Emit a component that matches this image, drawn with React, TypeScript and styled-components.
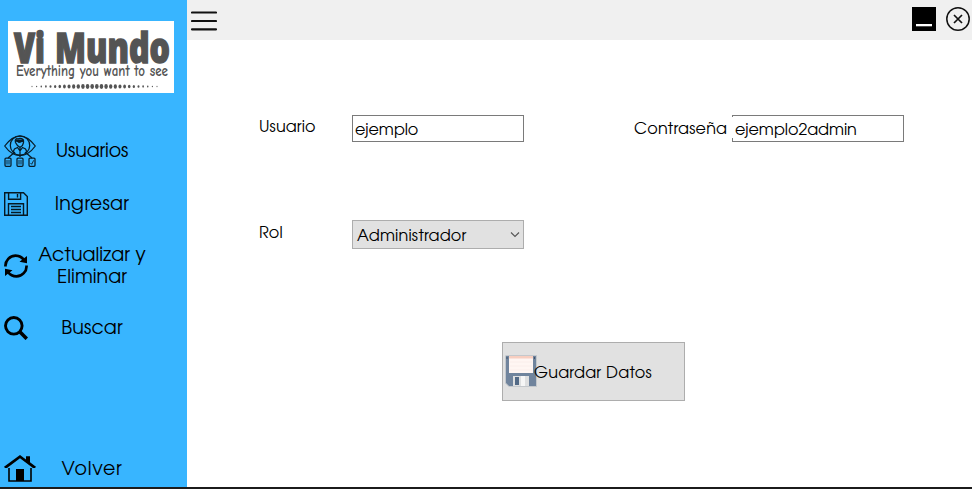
import React from "react";
import styled, { createGlobalStyle } from "styled-components";

const GlobalStyle = createGlobalStyle`
  *, *::before, *::after { box-sizing: border-box; }
  body { margin: 0; background: #fff; overflow: hidden; }
  body, input, button { font-family: "Century Gothic", "URW Gothic", "TeX Gyre Adventor", "Questrial", "Didact Gothic", "Jost", "Lato", sans-serif; color: #000; }
  svg { display: block; flex: none; }
`;

const Window = styled.div`
  display: grid;
  grid-template-columns: 187px 1fr;
  height: 489px;
  width: 972px;
  border-bottom: 2px solid #1b1b1b;
  background: #fff;
`;

const Sidebar = styled.aside`
  display: flex;
  flex-direction: column;
  background: #38b5ff;
  padding-top: 21px;
`;

const Logo = styled.div`
  width: 166px;
  height: 72px;
  margin: 0 0 32px 8px;
  background: #fff;
`;

const NavItem = styled.a<{ $height: number; $last?: boolean }>`
  display: grid;
  grid-template-columns: 184px;
  align-items: center;
  height: ${(p) => p.$height}px;
  margin-top: ${(p) => (p.$last ? "auto" : "0")};
  padding-top: ${(p) => (p.$last ? "2px" : "0")};
  > * { grid-area: 1 / 1; }
  > svg { margin-left: 4px; }
`;

const NavLabel = styled.span<{ $spacing: number }>`
  text-align: center;
  font-size: 19px;
  line-height: 22px;
  letter-spacing: ${(p) => p.$spacing}px;
  padding-top: 2px;
`;

const Main = styled.main`
  display: flex;
  flex-direction: column;
`;

const TopBar = styled.header`
  display: flex;
  align-items: flex-start;
  height: 40px;
  padding: 7px 2px 0 4px;
  background: #f0f0f0;
`;

const WindowControls = styled.div`
  display: flex;
  gap: 10px;
  margin-left: auto;
`;

const Form = styled.form`
  display: grid;
  grid-template-columns: 93px 172px 110px 98px 172px;
  grid-template-rows: 27px 29px 59px;
  row-gap: 78px;
  padding: 75px 0 0 72px;
`;

const FieldLabel = styled.label<{ $spacing: number; $column?: number; $top?: number }>`
  grid-column: ${(p) => p.$column ?? 1};
  padding-top: ${(p) => p.$top ?? 3}px;
  font-size: 16px;
  line-height: 20px;
  letter-spacing: ${(p) => p.$spacing}px;
  white-space: nowrap;
`;

const Input = styled.input<{ $spacing: number; $column: number; $clipped?: boolean }>`
  grid-column: ${(p) => p.$column};
  width: 172px;
  height: 27px;
  padding: 4px 2px 0 ${(p) => (p.$clipped ? 3 : 2)}px;
  border: 1px solid #7a7a7a;
  border-left-width: ${(p) => (p.$clipped ? 0 : 1)}px;
  border-radius: 0;
  outline: none;
  font-size: 16px;
  letter-spacing: ${(p) => p.$spacing}px;
  background: ${(p) =>
    p.$clipped
      ? "linear-gradient(#7a7a7a, #7a7a7a) 0 0 / 1px 1px no-repeat, linear-gradient(#7a7a7a, #7a7a7a) 0 100% / 1px 3px no-repeat, #fff"
      : "#fff"};
`;

const Combo = styled.div`
  grid-column: 2;
  display: flex;
  align-items: center;
  justify-content: space-between;
  height: 29px;
  padding: 3px 3px 0 4px;
  border: 1px solid #adadad;
  background: #e1e1e1;
  font-size: 16px;
  letter-spacing: 0.2px;
  > svg { margin-bottom: 4px; }
`;

const SaveButton = styled.button`
  grid-column: 1 / -1;
  grid-row: 3;
  display: flex;
  align-items: center;
  width: 183px;
  height: 59px;
  margin: 15px 0 0 243px;
  padding: 0 0 0 2px;
  border: 1px solid #adadad;
  border-radius: 0;
  background: #e1e1e1;
  font-size: 16px;
  letter-spacing: 0.25px;
  white-space: nowrap;
  > svg { margin-bottom: 2px; }
  > span { margin: 4px 0 0 -3px; }
`;

const dots = Array.from({ length: 28 }, (_, i) => ({
  x: 24 + i * 4.63,
  r: 0.55 + 1.6 * Math.sin((Math.PI * (i + 0.5)) / 28) ** 1.3,
}));

const LogoArt = () => (
  <svg width="166" height="72" viewBox="0 0 166 72" fill="#545454">
    <g fontFamily="Open Sans, sans-serif" fontWeight="800" fontSize="43" stroke="#545454" strokeWidth="1.600">
      <text x="6" y="41.500" textLength="31" lengthAdjust="spacingAndGlyphs">Vi</text>
      <text x="47" y="41.500" textLength="115" lengthAdjust="spacingAndGlyphs">Mundo</text>
    </g>
    <text
      x="8" y="54.500" textLength="152" lengthAdjust="spacingAndGlyphs"
      fontFamily="Comic Neue, Lato, sans-serif" fontSize="15.500" fontWeight="700"
      stroke="#fff" strokeWidth="1.500" paintOrder="stroke"
    >
      Everything you want to see
    </text>
    {dots.map((d) => <ellipse key={d.x} cx={d.x} cy="65.5" rx={d.r * 0.85} ry={d.r * 1.15} />)}
  </svg>
);

const UsersIcon = () => (
  <svg width="32" height="32" viewBox="0 0 32 32" fill="none" stroke="#071c28" strokeWidth="1.25">
    <path d="M.7 11C5 5 10 1 16 1s11 4 15.300 10C27 17 22 20.500 16 20.500S5 17 .7 11Z" />
    <circle cx="16" cy="10.500" r="9.700" />
    <path d="M11.500 7.500c-1-3 1-4.500 2.500-3.500 2-1.500 6-.5 5.500 3.500l-1 3-2.500 2-2.500-2Z" />
    <path d="m12 5.500 3 1.800 5-2M9 17l1.500-3 3-1.500L16 16l2.500-3.500 3 1.500 1.500 3M16 13v9M11 17l-7 6M21 17l7 6" />
    <path d="M12 4.500h8v2l-4 1-4-1Z" fill="#071c28" stroke="none" />
    <rect x="1" y="23" width="6" height="8.300" rx="1" />
    <rect x="13" y="23" width="6" height="8.300" rx="1" />
    <rect x="25" y="23" width="6" height="8.300" rx="1" />
    <path d="M3 25v4.500M5 25v4.500M15 25v4.500M17 25v4.500M26.500 28l1.200 1.300 2-4" strokeWidth=".9" />
  </svg>
);

const DiskIcon = () => (
  <svg width="24" height="24" viewBox="0 0 24 24" fill="none" stroke="#061923" strokeWidth="1.400">
    <path d="M.7.7h18.800l3.800 3.800v18.800H.7Z" />
    <path d="M4.600.7v6.500h12V.7M13.500 2v3.500M4.500 23V11.700h15V23M7 14.500h10M7 17.500h10M7 20.500h10" />
  </svg>
);

const RefreshIcon = () => (
  <svg width="24" height="24" viewBox="0 0 24 24" fill="none" stroke="#000" strokeWidth="2.700">
    <path d="M1.500 12.500C1 6.500 6 1.700 11.500 1.600c3.500 0 6.500 1.600 8.500 4.400" />
    <path d="M22.500 11.500C23 17.500 18 22.300 12.500 22.400c-3.500 0-6.500-1.600-8.500-4.400" />
    <path d="M23 2v7.200l-7.500-1.400ZM1 22v-7.200l7.500 1.400Z" fill="#000" stroke="none" />
  </svg>
);

const SearchIcon = () => (
  <svg width="24" height="24" viewBox="0 0 24 24" fill="none" stroke="#000">
    <circle cx="9.800" cy="9.800" r="8.300" strokeWidth="2.900" />
    <path d="m15.800 15.800 7 7" strokeWidth="3.600" />
  </svg>
);

const HomeIcon = () => (
  <svg width="32" height="32" viewBox="0 0 32 32">
    <path d="M5 15v13h22V15" fill="none" stroke="#000" strokeWidth="1.600" />
    <path d="M0 13.800 16 2l6 4.400V3.300h4v6l6 4.500-1 1.200h-2L16 5.300 3 15H1Z" />
    <path d="M12 16h8v12h-8Z" />
  </svg>
);

const FloppyIcon = () => (
  <svg width="32" height="32" viewBox="0 0 32 32">
    <path d="M1 .5h30.500v31H4L.5 28V1Z" fill="#70849d" stroke="#c4c8cc" />
    <path d="M4 1h24v17H4Z" fill="#fff6f3" />
    <path d="M4 1h24v2.500H4Z" fill="#f7cec0" />
    <path d="M5 7h22M5 11h22M5 15h22" stroke="#faeeeb" />
    <path d="M8 21h16v10H8Z" fill="#dedfe0" />
    <path d="M10 22h4v8h-4Z" fill="#536a86" />
    <path d="M16 21h4v10h-4Z" fill="#f6f6f6" />
    <path d="M1.500 2h1v2h-1ZM29 2h1v2h-1Z" fill="#41536a" />
  </svg>
);

const MenuIcon = () => (
  <svg width="26" height="24" viewBox="0 0 26 24" stroke="#111" strokeWidth="2.200" strokeLinecap="round">
    <path d="M1 5.500h24M1 14h24M1 22.300h24" />
  </svg>
);

const MinimizeIcon = () => (
  <svg width="24" height="24" viewBox="0 0 24 24">
    <path d="M0 0h24v24H0Z" />
    <path d="M4 17h16v2.300H4Z" fill="#fff" />
  </svg>
);

const CloseIcon = () => (
  <svg width="24" height="24" viewBox="0 0 24 24" fill="none" stroke="#111">
    <circle cx="12" cy="12" r="11.200" strokeWidth="1.500" />
    <path d="m8 8 8 8M16 8l-8 8" strokeWidth="1.700" />
  </svg>
);

const ChevronIcon = () => (
  <svg width="10" height="8" viewBox="0 0 10 8" fill="none" stroke="#555" strokeWidth="1.100">
    <path d="m1 2.500 4 4 4-4" />
  </svg>
);

export default function App() {
  return (
    <>
      <GlobalStyle />
      <Window>
        <Sidebar>
          <Logo><LogoArt /></Logo>
          <NavItem $height={52}>
            <UsersIcon />
            <NavLabel $spacing={-0.15}>Usuarios</NavLabel>
          </NavItem>
          <NavItem $height={53}>
            <DiskIcon />
            <NavLabel $spacing={0.25}>Ingresar</NavLabel>
          </NavItem>
          <NavItem $height={72}>
            <RefreshIcon />
            <NavLabel $spacing={0.05}>Actualizar y<br />Eliminar</NavLabel>
          </NavItem>
          <NavItem $height={52}>
            <SearchIcon />
            <NavLabel $spacing={0.15}>Buscar</NavLabel>
          </NavItem>
          <NavItem $height={38} $last>
            <HomeIcon />
            <NavLabel $spacing={0.7}>Volver</NavLabel>
          </NavItem>
        </Sidebar>
        <Main>
          <TopBar>
            <MenuIcon />
            <WindowControls>
              <MinimizeIcon />
              <CloseIcon />
            </WindowControls>
          </TopBar>
          <Form>
            <FieldLabel $spacing={0.1}>Usuario</FieldLabel>
            <Input $column={2} $spacing={-0.1} defaultValue="ejemplo" />
            <FieldLabel $column={4} $spacing={0.2} $top={5}>Contraseña</FieldLabel>
            <Input $column={5} $spacing={-0.07} $clipped defaultValue="ejemplo2admin" />
            <FieldLabel $spacing={0.1} $top={4}>Rol</FieldLabel>
            <Combo>Administrador<ChevronIcon /></Combo>
            <SaveButton type="button">
              <FloppyIcon />
              <span>Guardar Datos</span>
            </SaveButton>
          </Form>
        </Main>
      </Window>
    </>
  );
}
